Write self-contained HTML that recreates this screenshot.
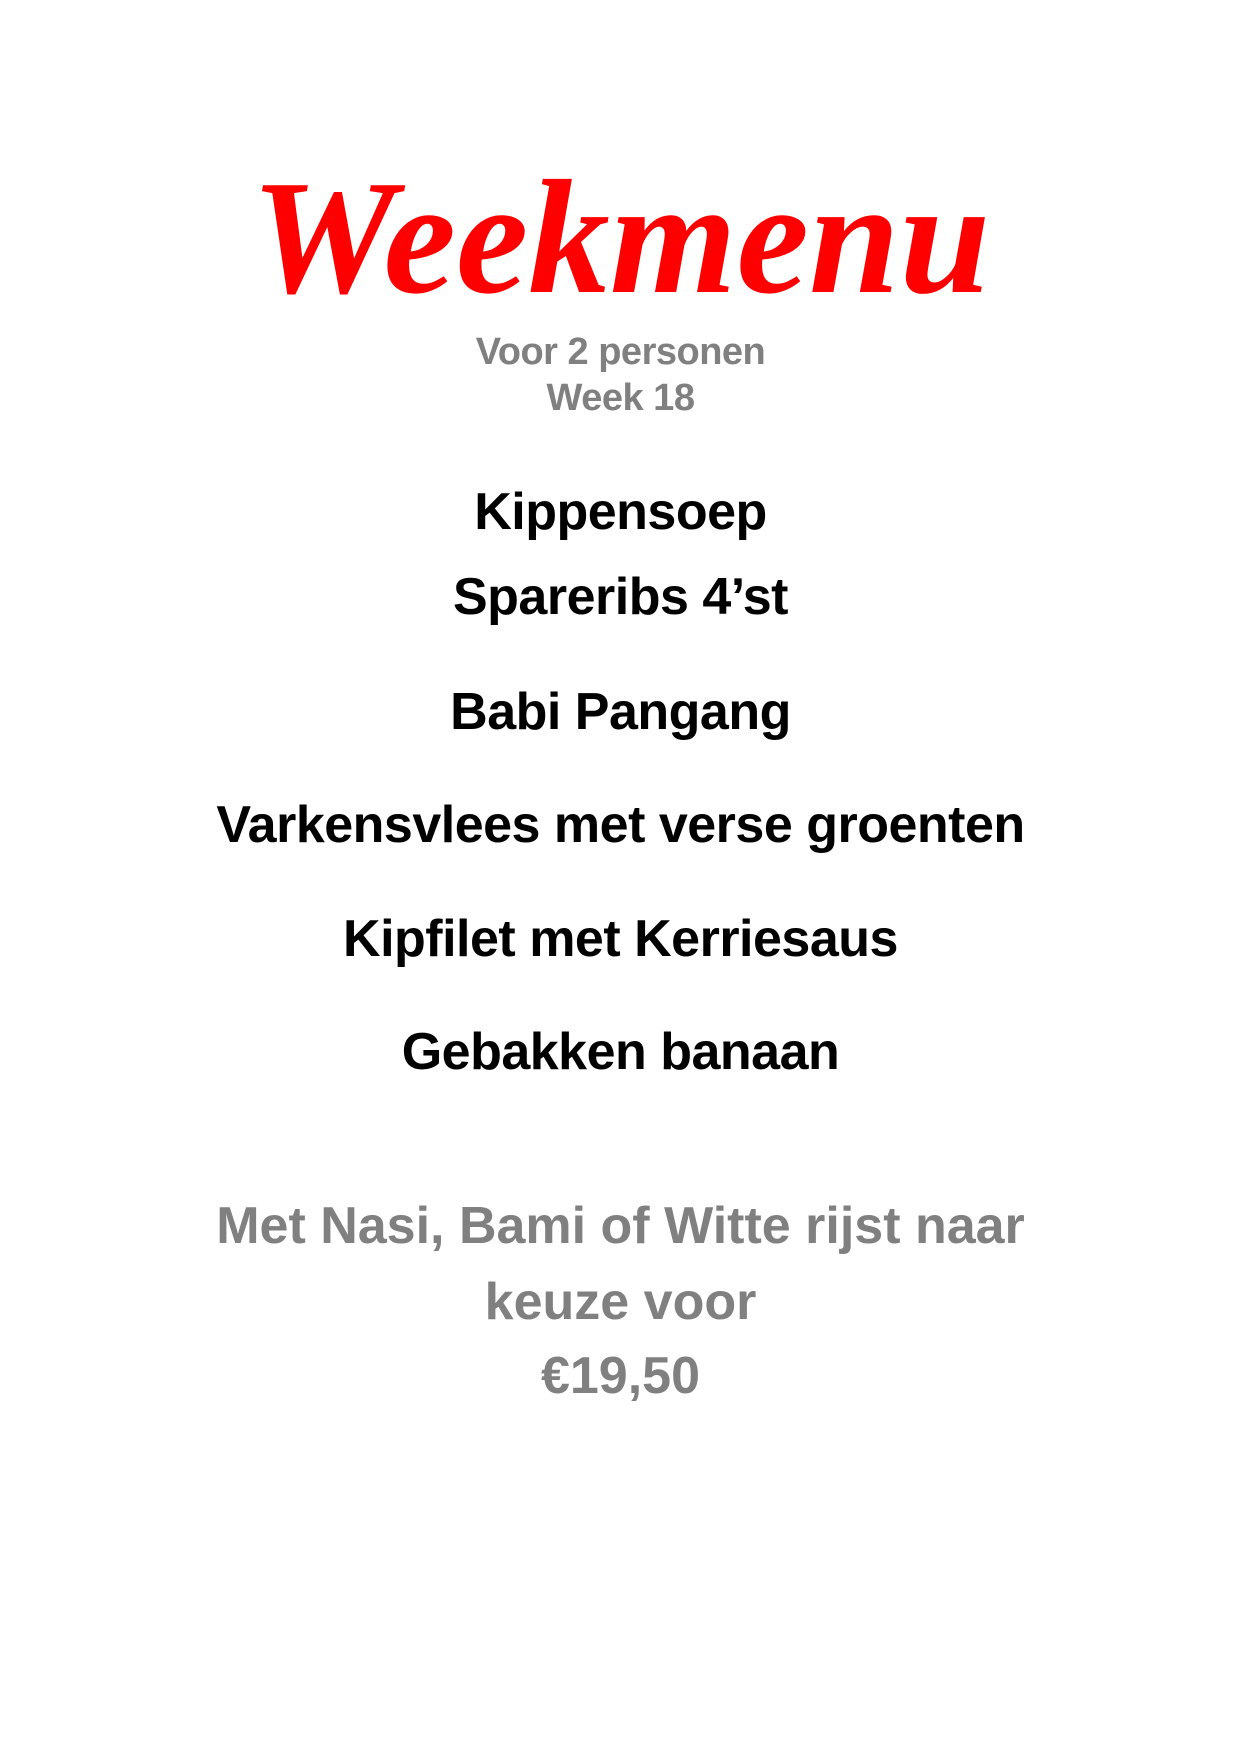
<!DOCTYPE html>
<html><head><meta charset="utf-8"><style>
html,body{margin:0;padding:0;background:#fff;}
body{width:1241px;height:1755px;position:relative;overflow:hidden;}
.l{position:absolute;left:0;width:1241px;text-align:center;line-height:1;white-space:nowrap;font-family:"Liberation Sans",sans-serif;font-weight:bold;}
.t{font-family:"Liberation Serif",serif;font-style:italic;font-size:163px;color:#ff0000;top:157px;}
.s{font-size:38px;color:#808080;letter-spacing:-0.5px;}
.m{font-size:52px;color:#000;letter-spacing:-0.5px;}
.g{font-size:52px;color:#808080;letter-spacing:0px;}
</style></head><body>
<div class="l t">Weekmenu</div>
<div class="l s" style="top:333px">Voor 2 personen</div>
<div class="l s" style="top:379px">Week 18</div>
<div class="l m" style="top:486px">Kippensoep</div>
<div class="l m" style="top:571px">Spareribs 4’st</div>
<div class="l m" style="top:686px">Babi Pangang</div>
<div class="l m" style="top:799px">Varkensvlees met verse groenten</div>
<div class="l m" style="top:913px">Kipfilet met Kerriesaus</div>
<div class="l m" style="top:1026px">Gebakken banaan</div>
<div class="l g" style="top:1200px">Met Nasi, Bami of Witte rijst naar</div>
<div class="l g" style="top:1276px">keuze voor</div>
<div class="l g" style="top:1350px">€19,50</div>
</body></html>
